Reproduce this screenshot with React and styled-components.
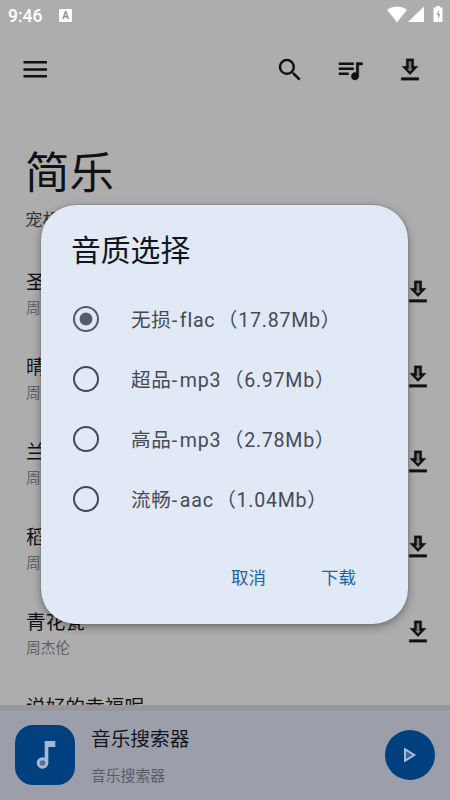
import React, { useState } from "react";
import styled, { createGlobalStyle } from "styled-components";

const songs = [
  { name: "圣诞星", singer: "周杰伦" },
  { name: "晴天", singer: "周杰伦" },
  { name: "兰亭序", singer: "周杰伦" },
  { name: "稻香", singer: "周杰伦" },
  { name: "青花瓷", singer: "周杰伦" },
  { name: "说好的幸福呢", singer: "周杰伦" },
];

const qualities = [
  { label: "无损", format: "flac", size: "17.87Mb" },
  { label: "超品", format: "mp3", size: "6.97Mb" },
  { label: "高品", format: "mp3", size: "2.78Mb" },
  { label: "流畅", format: "aac", size: "1.04Mb" },
];

const MenuIcon = () => (
  <svg width="30" height="30" viewBox="0 0 30 30" fill="currentColor">
    <path d="M3.500 6h23.500v2.600H3.500zM3.500 13.200h23.500v2.600H3.500zM3.500 20h23.500v2.400H3.500z" />
  </svg>
);

const SearchIcon = () => (
  <svg width="30" height="30" viewBox="0 0 24 24" fill="currentColor">
    <path d="M15.5 14h-.79l-.28-.27A6.47 6.47 0 0 0 16 9.5 6.5 6.5 0 1 0 9.5 16c1.61 0 3.09-.59 4.23-1.57l.27.28v.79l5 4.99L20.49 19l-4.99-5zm-6 0C7.01 14 5 11.99 5 9.5S7.01 5 9.5 5 14 7.01 14 9.5 11.99 14 9.5 14z" />
  </svg>
);

const QueueIcon = () => (
  <svg width="30" height="30" viewBox="0 0 24 24" fill="currentColor">
    <path d="M15 6H3v2h12V6zm0 4H3v2h12v-2zM3 16h8v-2H3v2z" />
    <path d="M17 6v8.180c-.31-.11-.65-.18-1-.18-1.660 0-3 1.340-3 3s1.340 3 3 3 3-1.340 3-3V8h3V6h-5z" stroke="currentColor" strokeWidth=".3" />
  </svg>
);

const DownloadIcon = () => (
  <svg width="30" height="30" viewBox="0 0 24 24" fill="currentColor">
    <path d="M11 5h2v6.500l-1 1.300-1-1.300z" fillOpacity=".3" />
    <path d="M13 5v6h1.17L12 13.17 9.83 11H11V5h2m2-2H9v6H5.4l6.6 6.8L18.6 9H15V3zm4 15H5v2.2h14V18z" stroke="currentColor" strokeWidth=".2" />
  </svg>
);

export default function App() {
  const [checked, setChecked] = useState(0);

  return (
    <Screen>
      <GlobalStyle />
      <StatusBar>
        <Time>9:46</Time>
        <Keyboard>A</Keyboard>
        <svg width="57" height="18" viewBox="0 0 57 18" fill="#fff">
          <path d="M0 3.500Q10 -2.500 20 3.500L10 16.500z" />
          <path d="M37 .5V16H21z" />
          <path d="M49 0h4v1.500h2.500V16h-9V1.500H49z" />
          <path d="M51.800 4l-2.300 5h1.700v4l2.300-5h-1.700z" fill="#a0a0a1" />
        </svg>
      </StatusBar>

      <Toolbar>
        <IconButton $wide={70}><MenuIcon /></IconButton>
        <Actions>
          <IconButton><SearchIcon /></IconButton>
          <IconButton><QueueIcon /></IconButton>
          <IconButton><DownloadIcon /></IconButton>
        </Actions>
      </Toolbar>

      <Header>
        <h1>简乐</h1>
        <p>宠机</p>
      </Header>

      <SongList>
        {songs.map((song) => (
          <SongRow key={song.name}>
            <SongText>
              <h3>{song.name}</h3>
              <p>{song.singer}</p>
            </SongText>
            <DownloadIcon />
          </SongRow>
        ))}
      </SongList>

      <Player>
        <Cover>
          <svg width="22" height="30" viewBox="0 0 22 30">
            <path d="M12.500 23V2.800h7v2.500h-6" fill="none" stroke="#a5b9d6" strokeWidth="3.600" />
            <circle cx="8.500" cy="23" r="4.300" fill="#53708f" stroke="#a5b9d6" strokeWidth="3" />
          </svg>
        </Cover>
        <PlayerText>
          <h3>音乐搜索器</h3>
          <p>音乐搜索器</p>
        </PlayerText>
        <PlayButton>
          <svg width="14" height="16" viewBox="0 0 14 16">
            <path d="M2 2.300v11.400L11.300 8z" fill="#3c689b" stroke="#a9bfdc" strokeWidth="1.900" />
          </svg>
        </PlayButton>
      </Player>

      <Overlay>
        <Dialog>
          <h2>音质选择</h2>
          <Options>
            {qualities.map((quality, index) => (
              <Option key={quality.label} onClick={() => setChecked(index)}>
                <Radio $checked={checked === index} />
                <OptionText>
                  {quality.label}
                  <Dash>-</Dash>
                  {quality.format}
                  <Size>（{quality.size}）</Size>
                </OptionText>
              </Option>
            ))}
          </Options>
          <Buttons>
            <TextButton>取消</TextButton>
            <TextButton>下载</TextButton>
          </Buttons>
        </Dialog>
      </Overlay>
    </Screen>
  );
}

const GlobalStyle = createGlobalStyle`
  * {
    box-sizing: border-box;
  }
  body {
    margin: 0;
  }
  h1, h2, h3, p {
    margin: 0;
    font-weight: 400;
    white-space: nowrap;
  }
  button {
    border: 0;
    padding: 0;
    background: none;
    font-family: inherit;
    color: inherit;
  }
  svg {
    display: block;
    flex-shrink: 0;
  }
`;

const Screen = styled.div`
  position: relative;
  display: flex;
  flex-direction: column;
  width: 450px;
  height: 800px;
  overflow: hidden;
  background: #adadae;
  color: #111113;
  font-family: Roboto, "Noto Sans CJK SC", sans-serif;
`;

const StatusBar = styled.div`
  display: flex;
  align-items: center;
  height: 30px;
  padding: 0 7px;
  color: #fff;
  svg {
    margin: 0 -1px 0 auto;
  }
`;

const Time = styled.span`
  width: 52px;
  padding: 1px 0 0 1px;
  font-size: 17.5px;
  font-weight: 500;
`;

const Keyboard = styled.span`
  width: 13px;
  height: 13px;
  border-radius: 1px;
  background: #fff;
  color: #929293;
  font-size: 10px;
  font-weight: 700;
  line-height: 13px;
  text-align: center;
`;

const Toolbar = styled.div`
  display: flex;
  justify-content: space-between;
  height: 80px;
  padding-right: 10px;
`;

const Actions = styled.div`
  display: flex;
`;

const IconButton = styled.button`
  display: flex;
  align-items: center;
  justify-content: center;
  width: ${(props) => props.$wide || 60}px;
`;

const Header = styled.div`
  height: 139px;
  padding: 32px 25px 0;
  h1 {
    font-size: 44.5px;
    line-height: 64px;
  }
  p {
    margin-top: 2px;
    color: #39393b;
    font-size: 17.5px;
    line-height: 25px;
  }
`;

const SongList = styled.div`
  flex: 1;
  min-height: 0;
  overflow: hidden;
`;

const SongRow = styled.div`
  display: flex;
  align-items: center;
  justify-content: space-between;
  height: 85px;
  padding: 0 17px 0 26px;
`;

const SongText = styled.div`
  padding-top: 6px;
  h3 {
    font-size: 19.7px;
    line-height: 28px;
  }
  p {
    color: #626264;
    font-size: 14.7px;
    line-height: 23px;
  }
`;

const Player = styled.div`
  display: flex;
  align-items: center;
  height: 95px;
  padding: 0 15px 1px;
  border-top: 6px solid #98989b;
  background: linear-gradient(#9ba2ad, #9c9eaa 12px);
`;

const Cover = styled.div`
  display: flex;
  align-items: center;
  justify-content: center;
  width: 60px;
  height: 60px;
  border-radius: 18px;
  background: #00407f;
`;

const PlayerText = styled.div`
  flex: 1;
  padding: 6px 0 0 16px;
  h3 {
    color: #14161e;
    font-size: 19.7px;
    line-height: 36px;
  }
  p {
    color: #5b5d66;
    font-size: 14.8px;
    line-height: 36px;
  }
`;

const PlayButton = styled.button`
  display: flex;
  align-items: center;
  justify-content: center;
  width: 50px;
  height: 50px;
  border-radius: 50%;
  background: #00407f;
`;

const Overlay = styled.div`
  position: absolute;
  inset: 0;
  padding: 205px 42px 0 41px;
`;

const Dialog = styled.div`
  height: 419px;
  padding: 26px 30px 0;
  border-radius: 35px;
  background: #e1e8f6;
  box-shadow: 0 3px 10px rgba(0, 0, 0, 0.35), 0 0 2px rgba(0, 0, 0, 0.25);
  h2 {
    height: 58px;
    color: #111520;
    font-size: 29.8px;
    line-height: 40px;
  }
`;

const Options = styled.div`
  display: flex;
  flex-direction: column;
`;

const Option = styled.div`
  display: flex;
  align-items: center;
  gap: 32px;
  height: 60px;
  padding-left: 2px;
`;

const OptionText = styled.span`
  padding-top: 3px;
  color: #464a55;
  font-size: 19.6px;
  letter-spacing: 0.75px;
  line-height: 28px;
  white-space: nowrap;
`;

const Dash = styled.span`
  margin-right: 2px;
`;

const Size = styled.span`
  margin-left: 2.5px;
`;

const Radio = styled.span`
  width: 26px;
  height: 26px;
  border: 2.5px solid ${(props) => (props.$checked ? "#535b70" : "#434757")};
  border-radius: 50%;
  background: ${(props) =>
    props.$checked ? "radial-gradient(circle, #535b70 6px, transparent 6.8px)" : "none"};
`;

const Buttons = styled.div`
  display: flex;
  justify-content: flex-end;
  gap: 55px;
  padding: 29px 22px 0 0;
`;

const TextButton = styled.button`
  color: #1c64a4;
  font-size: 17.5px;
  line-height: 40px;
`;
